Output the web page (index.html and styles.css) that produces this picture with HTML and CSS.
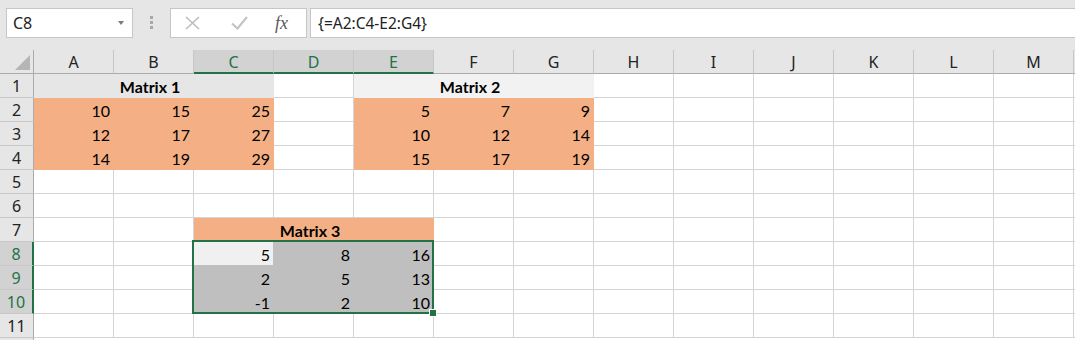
FILE: index.html
```html
<!DOCTYPE html>
<html>
<head>
    <meta charset="utf-8" />
    <title>Matrix Subtraction</title>
    <meta name="viewport" content="width=device-width, initial-scale=1">
    <link rel="stylesheet" href="styles.css">
</head>
<body>
    <div class="toolbar">
        <div class="namebox">
            <span>C8</span>
            <i class="arrow"></i>
        </div>
        <div class="grip"><i></i><i></i><i></i></div>
        <div class="fxbox">
            <svg class="cancel" width="15" height="14" viewBox="0 0 15 14"><path d="M1 1L14 13M14 1L1 13" stroke="#bdbdbd" stroke-width="1.6" fill="none"/></svg>
            <svg class="enter" width="17" height="14" viewBox="0 0 17 14"><path d="M1 7.5L6.5 12.5L16 1" stroke="#c4c4c4" stroke-width="2.2" fill="none"/></svg>
            <span class="fx">f<span>x</span></span>
        </div>
        <div class="formula">{=A2:C4-E2:G4}</div>
    </div>
    <div id="sheet" class="sheet"></div>
    <script>
        (function() {
            let letters = "ABCDEFGHIJKLM".split(""),
                sheet = document.getElementById("sheet"),
                values = {
                    A1: "Matrix 1", E1: "Matrix 2", C7: "Matrix 3",
                    A2: 10, B2: 15, C2: 25, E2: 5, F2: 7, G2: 9,
                    A3: 12, B3: 17, C3: 27, E3: 10, F3: 12, G3: 14,
                    A4: 14, B4: 19, C4: 29, E4: 15, F4: 17, G4: 19,
                    C8: 5, D8: 8, E8: 16,
                    C9: 2, D9: 5, E9: 13,
                    C10: -1, D10: 2, E10: 10
                },
                merged = {A1: 3, E1: 3, C7: 3},   // merged cells: width in columns
                fills = [                          // [first col, first row, last col, last row, class]
                    [0, 1, 2, 1, "title grey"],
                    [4, 1, 6, 1, "title light"],
                    [2, 7, 4, 7, "title orange"],
                    [0, 2, 2, 4, "orange"],
                    [4, 2, 6, 4, "orange"],
                    [2, 8, 4, 10, "picked"]
                ],
                lastRow = 11,
                html = "";

            // column headers
            html += '<div class="corner"><span></span></div>';
            for (let c = 0; c < letters.length; c++) {
                html += '<div class="colhead' + (c >= 2 && c <= 4 ? ' on' : '') + '">' + letters[c] + '</div>';
            }
            html += '<div class="colhead edge"></div>';

            // rows
            for (let r = 1; r <= lastRow; r++) {
                html += '<div class="rowhead' + (r >= 8 && r <= 10 ? ' on' : '') + '">' + r + '</div>';
                for (let c = 0; c < letters.length; ) {
                    let key = letters[c] + r,
                        span = merged[key] || 1,
                        cls = "cell";
                    fills.forEach(function(f) {
                        if (c >= f[0] && c <= f[2] && r >= f[1] && r <= f[3]) cls += " " + f[4];
                    });
                    if (span > 1) cls += " span" + span;
                    if (key === "C8") cls += " active";
                    html += '<div class="' + cls + '">' + (values[key] !== undefined ? values[key] : '') + '</div>';
                    c += span;
                }
                html += '<div class="cell edge"></div>';
            }
            // top of the next row header peeks in under row 11
            html += '<div class="rowhead"></div>';

            html += '<div class="selection"><span class="handle"></span></div>';
            sheet.innerHTML = html;
        })()
    </script>
</body>
</html>
```

FILE: styles.css
```css
body{
    margin: 0;
    overflow: hidden;
    font-family: "Noto Sans", sans-serif;
    color: #222;
    background: #fff;
}

/* formula bar */
.toolbar{
    display: flex;
    align-items: flex-start;
    box-sizing: border-box;
    height: 50px;
    padding: 8px 0 0 6px;
    background: #e6e6e6;
}
.namebox{
    display: flex;
    align-items: center;
    justify-content: space-between;
    box-sizing: border-box;
    width: 127px;
    height: 30px;
    padding: 0 8px 0 6px;
    border: 1px solid #c6c6c6;
    background: #fff;
    font-size: 16px;
}
.arrow{
    width: 0;
    height: 0;
    border-top: 4px solid #7a7a7a;
    border-left: 3.5px solid transparent;
    border-right: 3.5px solid transparent;
}
.grip{
    display: flex;
    flex-direction: column;
    align-items: center;
    gap: 2px;
    width: 37px;
    margin-top: 8px;
}
.grip i{
    width: 3px;
    height: 3px;
    background: #a8a8a8;
}
.fxbox{
    display: flex;
    align-items: center;
    box-sizing: border-box;
    width: 137px;
    height: 30px;
    padding-left: 14px;
    border: 1px solid #c6c6c6;
    background: #fff;
}
.enter{
    margin-left: 31px;
}
.fx{
    margin-left: 27px;
    font: italic 18px "Liberation Serif", serif;
    color: #5a5a5a;
}
.formula{
    flex: 1;
    box-sizing: border-box;
    height: 30px;
    margin-left: 3px;
    padding: 0 7px;
    border: 1px solid #c6c6c6;
    border-right: 0;
    background: #fff;
    font-size: 15.5px;
    line-height: 28px;
}

/* grid */
.sheet{
    position: relative;
    display: grid;
    grid-template-columns: 34px repeat(13, 80px) 1fr;
    grid-auto-rows: 24px;
}
.sheet div{
    box-sizing: border-box;
}
.corner, .colhead, .rowhead{
    background: #e6e6e6;
}
.corner{
    display: flex;
    justify-content: flex-end;
    align-items: flex-end;
    padding: 0 3px 3px 0;
    border-right: 1px solid #ababab;
    border-bottom: 1px solid #ababab;
}
.corner span{
    width: 15px;
    height: 15px;
    background: #b5b5b5;
    clip-path: polygon(100% 0, 100% 100%, 0 100%);
}
.colhead{
    padding-top: 2px;
    text-align: center;
    font-size: 16px;
    line-height: 21px;
    border-right: 1px solid #c6c6c6;
    border-bottom: 1px solid #ababab;
}
.colhead.on{
    background: #d2d2d2;
    color: #217346;
    border-bottom: 2px solid #217346;
}
.rowhead{
    padding-top: 2px;
    text-align: center;
    font-size: 16px;
    line-height: 21px;
    border-right: 1px solid #ababab;
    border-bottom: 1px solid #c8c8c8;
}
.rowhead.on{
    background: #d2d2d2;
    color: #217346;
    border-right: 2px solid #217346;
}
.cell{
    padding: 2px 3px 0;
    text-align: right;
    font: 16px/21px Lato, sans-serif;
    color: #000;
    white-space: nowrap;
    border-right: 1px solid #d4d4d4;
    border-bottom: 1px solid #d4d4d4;
}
.span3{
    grid-column: span 3;
}
.title{
    padding-right: 10px;
    text-align: center;
    font-weight: bold;
}
.grey{
    background: #e7e6e6;
    border-color: #e7e6e6;
}
.light{
    background: #f2f2f2;
    border-color: #f2f2f2;
}
.orange{
    background: #f4b084;
    border-color: #f4b084;
}
.picked{
    background: #bfbfbf;
    border-color: #bfbfbf;
}
.cell.active{
    background: #f0f0f0;
}
.edge{
    border-right: 0;
}

/* selected range C8:E10 */
.selection{
    position: absolute;
    grid-column: 4 / 7;
    grid-row: 9 / 12;
    top: -2px;
    left: -2px;
    right: 0;
    bottom: 0;
    border: 2px solid #217346;
    pointer-events: none;
}
.handle{
    position: absolute;
    right: -4px;
    bottom: -4px;
    width: 6px;
    height: 6px;
    background: #217346;
    box-shadow: 0 0 0 1px #fff;
}
```
